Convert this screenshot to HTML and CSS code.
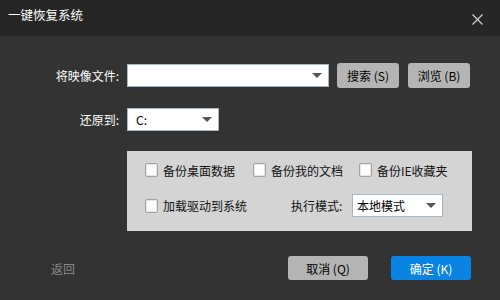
FILE: index.html
```html
<!DOCTYPE html>
<html lang="zh">
<head>
<meta charset="utf-8">
<link rel="stylesheet" href="styles.css">
</head>
<body>
<div class="window">
  <div class="titlebar">
    <span class="title">一键恢复系统</span>
    <svg class="close" width="11" height="11" viewBox="0 0 11 11"><path d="M0.5 0.5L10.5 10.5M10.5 0.5L0.5 10.5" stroke="#cfcfcf" stroke-width="1.2" fill="none"/></svg>
  </div>
  <div class="content">
    <div class="row row1">
      <label class="lbl">将映像文件:</label>
      <div class="field combo"><span class="val"></span><span class="arrow"></span></div>
      <button class="btn grey">搜索 (S)</button>
      <button class="btn grey">浏览 (B)</button>
    </div>
    <div class="row row2">
      <label class="lbl">还原到:</label>
      <div class="field drive"><span class="val">C:</span><span class="arrow"></span></div>
    </div>
    <div class="panel">
      <div class="prow prow1">
        <div class="chk c1"><span class="box"></span>备份桌面数据</div>
        <div class="chk c2"><span class="box"></span>备份我的文档</div>
        <div class="chk c3"><span class="box"></span>备份IE收藏夹</div>
      </div>
      <div class="prow prow2">
        <div class="chk c4"><span class="box"></span>加载驱动到系统</div>
        <span class="mode-lbl">执行模式:</span>
        <div class="field mode"><span class="val">本地模式</span><span class="arrow"></span></div>
      </div>
    </div>
    <div class="footer">
      <span class="back">返回</span>
      <button class="btn grey wide">取消 (Q)</button>
      <button class="btn blue wide">确定 (K)</button>
    </div>
  </div>
</div>
</body>
</html>
```
FILE: styles.css
```css
* { box-sizing: border-box; }
html, body { margin: 0; padding: 0; }
body {
  font-family: "Noto Sans CJK SC", "Noto Sans", sans-serif;
  font-size: 12px;
  background: #333333;
}
.window {
  width: 500px;
  height: 300px;
  background: #333333;
  overflow: hidden;
}
.titlebar {
  height: 36px;
  background: #262626;
  display: flex;
  align-items: flex-start;
  justify-content: space-between;
  padding: 7px 17px 0 8px;
}
.title {
  color: #ffffff;
  font-size: 12.5px;
  line-height: 16px;
}
.close { margin-top: 7px; }
.content { padding-top: 27px; }
.row {
  display: flex;
  align-items: center;
}
.row1 { height: 25px; }
.row2 { height: 23px; margin-top: 20px; }
.lbl {
  width: 120px;
  text-align: right;
  color: #ffffff;
  padding-right: 1px;
  margin-right: 7px;
}
.field {
  background: #ffffff;
  border: 1px solid #a9b7c3;
  height: 23px;
  display: flex;
  align-items: center;
  justify-content: space-between;
  color: #000;
}
.combo { width: 202px; margin-right: 8px; }
.drive { width: 92px; padding-left: 8px; }
.arrow {
  width: 0; height: 0;
  border-left: 5px solid transparent;
  border-right: 5px solid transparent;
  border-top: 5px solid #555555;
  margin-right: 6px;
}
.btn {
  font-family: inherit;
  font-size: 12px;
  border: none;
  border-radius: 3px;
  height: 25px;
  width: 62px;
  padding: 0;
  color: #000;
}
.grey { background: #b4b4b4; }
.row1 .btn + .btn { margin-left: 9px; }
.panel {
  margin: 20px 0 0 127px;
  width: 345px;
  height: 80px;
  background: #d4d4d4;
  padding: 12px 0 0 18px;
}
.prow { display: flex; align-items: center; }
.prow1 { height: 14px; }
.prow2 { height: 23px; margin-top: 17px; }
.chk {
  display: flex;
  align-items: center;
  color: #111;
  white-space: nowrap;
}
.box {
  width: 13px;
  height: 14px;
  background: #ffffff;
  border: 1px solid #a3a3a3;
  border-radius: 2px;
  box-shadow: inset 0 0 0 1px #e6e6e6;
  margin-right: 5px;
  flex: none;
}
.c1 { width: 108px; }
.c2 { width: 106px; }
.c4 { width: 146px; }
.mode-lbl { color: #111; width: 61px; }
.mode { width: 91px; padding-left: 4px; }
.footer {
  display: flex;
  align-items: center;
  height: 24px;
  margin-top: 25px;
  padding-left: 51px;
}
.back { color: #8a8a8a; width: 237px; }
.wide { width: 80px; height: 24px; }
.blue { background: #0a84e4; color: #ffffff; margin-left: 23px; }
```
